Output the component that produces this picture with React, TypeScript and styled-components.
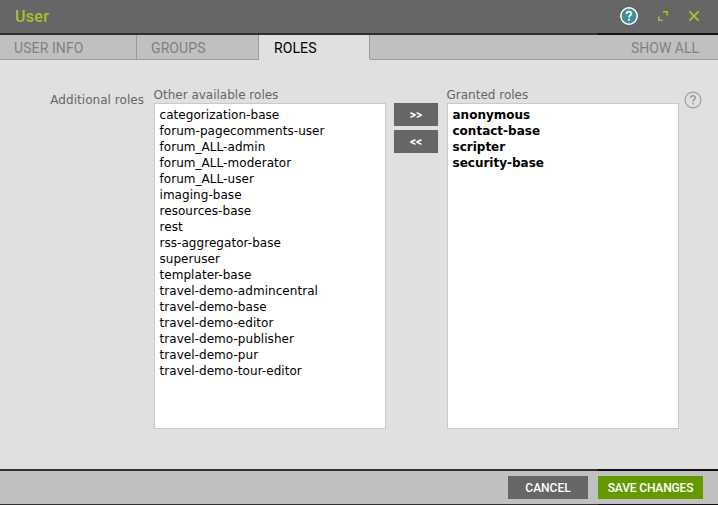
import React from "react";
import styled, { createGlobalStyle } from "styled-components";

const GlobalStyle = createGlobalStyle`
  *, *::before, *::after { box-sizing: border-box; }
  body { margin: 0; background: #e0e0e0; }
  button { border: 0; margin: 0; padding: 0; cursor: pointer; }
`;

const din = `Roboto, "Liberation Sans", sans-serif`;

const Dialog = styled.section`
  width: 718px;
  height: 505px;
  display: flex;
  flex-direction: column;
  overflow: hidden;
  background: #e0e0e0;
  color: #666;
  font: 12px/16px "DejaVu Sans", sans-serif;
`;

const Header = styled.header`
  flex: 0 0 33px;
  display: flex;
  align-items: center;
  justify-content: space-between;
  padding: 0 18px 0 15px;
  background: #666;
`;

const Title = styled.h1`
  margin: 0;
  color: #a7c22c;
  font: 500 16px/33px ${din};
  letter-spacing: 0.3px;
`;

const Actions = styled.div`
  display: flex;
  align-items: center;
  gap: 20px;
  padding-bottom: 1px;
`;

const IconButton = styled.button`
  display: flex;
  background: none;
`;

const Divider = styled.div<{ $size: number }>`
  flex: 0 0 ${(p) => p.$size}px;
  background: linear-gradient(to right, #303030 598px, #111 598px);
`;

const TabBar = styled.nav`
  flex: 0 0 25px;
  display: flex;
  background: #c0c0c0;
`;

const Tab = styled.button<{ $width: number; $active?: boolean }>`
  width: ${(p) => p.$width}px;
  padding: 2px 0 0 ${(p) => (p.$active ? 15 : 14)}px;
  text-align: left;
  border-right: 1px solid #9b9b9b;
  border-bottom: 1px solid ${(p) => (p.$active ? "#e0e0e0" : "#9b9b9b")};
  background: ${(p) => (p.$active ? "#e0e0e0" : "#c0c0c0")};
  color: ${(p) => (p.$active ? "#000" : "#808080")};
  font: 400 14px/22px ${din};
  letter-spacing: 0.1px;
`;

const ShowAll = styled.button`
  flex: 1;
  padding: 2px 19px 0 0;
  text-align: right;
  border-bottom: 1px solid #9b9b9b;
  background: #c0c0c0;
  color: #808080;
  font: 400 14px/22px ${din};
`;

const Form = styled.main`
  flex: 1;
  display: flex;
  align-items: flex-start;
  padding: 27px 16px 0 0;
`;

const FieldLabel = styled.div`
  width: 154px;
  padding: 5px 10px 0 0;
  text-align: right;
  letter-spacing: 0.04px;
`;

const RoleColumn = styled.div`
  width: 232px;
`;

const Caption = styled.div`
  height: 16px;
  margin-left: -0.5px;
`;

const RoleList = styled.ul<{ $bold?: boolean }>`
  height: 326px;
  margin: 0;
  padding: 3px 4.5px;
  list-style: none;
  border: 1px solid #c9c9c9;
  background: #fff;
  color: #000;
  font-weight: ${(p) => (p.$bold ? 700 : 400)};
  letter-spacing: ${(p) => (p.$bold ? 0 : 0.05)}px;
`;

const Role = styled.li`
  height: 16px;
  white-space: nowrap;
`;

const Transfer = styled.div`
  display: flex;
  flex-direction: column;
  gap: 4px;
  width: 44px;
  margin: 16px 9px 0 8px;
`;

const TransferButton = styled.button`
  height: 23px;
  background: #666;
  color: #fff;
  font: 700 12px/24px ${din};
`;

const FieldHelp = styled.button`
  display: flex;
  margin: 4px 0 0 4.5px;
  background: none;
`;

const Footer = styled.footer`
  flex: 0 0 33px;
  display: flex;
  align-items: center;
  justify-content: flex-end;
  gap: 10px;
  padding-right: 15px;
  background: #c0c0c0;
`;

const FooterButton = styled.button<{ $primary?: boolean }>`
  width: ${(p) => (p.$primary ? 105 : 80)}px;
  height: 23px;
  padding-top: 2px;
  background: ${(p) => (p.$primary ? "#669900" : "#666")};
  color: #fff;
  font: 500 12px/21px ${din};
  letter-spacing: ${(p) => (p.$primary ? -0.15 : 0)}px;
  white-space: nowrap;
`;

const HelpIcon = ({ filled }: { filled?: boolean }) => (
  <svg width="18" height="18" viewBox="0 0 18 18" fill="none">
    <circle
      cx="9"
      cy="9"
      r={filled ? 8.2 : 7.9}
      fill={filled ? "#428d9e" : "none"}
      stroke={filled ? "#fff" : "#9d9d9d"}
      strokeWidth={filled ? 1.5 : 1.2}
    />
    <path
      d="M6.6 6.9C6.6 3.9 11.3 4 11.3 6.7C11.3 8.4 9 8.4 9 10.4M9 11.8V13.5"
      stroke={filled ? "#fff" : "#9d9d9d"}
      strokeWidth={filled ? 1.9 : 1.5}
    />
  </svg>
);

const ExpandIcon = () => (
  <svg width="10" height="10" viewBox="0 0 10 10" fill="none" stroke="#a7c22c" strokeWidth="1.5">
    <path d="M5 0.8H9.2V4.4M0.8 5.4V9.2H4.6" />
  </svg>
);

const CloseIcon = () => (
  <svg width="12" height="12" viewBox="0 0 12 12" fill="none" stroke="#a7c22c" strokeWidth="1.9">
    <path d="M1.4 1.4L10.6 10.6M10.6 1.4L1.4 10.6" />
  </svg>
);

const availableRoles = [
  "categorization-base",
  "forum-pagecomments-user",
  "forum_ALL-admin",
  "forum_ALL-moderator",
  "forum_ALL-user",
  "imaging-base",
  "resources-base",
  "rest",
  "rss-aggregator-base",
  "superuser",
  "templater-base",
  "travel-demo-admincentral",
  "travel-demo-base",
  "travel-demo-editor",
  "travel-demo-publisher",
  "travel-demo-pur",
  "travel-demo-tour-editor",
];

const grantedRoles = ["anonymous", "contact-base", "scripter", "security-base"];

export default function App() {
  return (
    <>
      <GlobalStyle />
      <Dialog>
        <Header>
          <Title>User</Title>
          <Actions>
            <IconButton aria-label="Help"><HelpIcon filled /></IconButton>
            <IconButton aria-label="Expand"><ExpandIcon /></IconButton>
            <IconButton aria-label="Close"><CloseIcon /></IconButton>
          </Actions>
        </Header>
        <Divider $size={2} />
        <TabBar>
          <Tab $width={137}>USER INFO</Tab>
          <Tab $width={122}>GROUPS</Tab>
          <Tab $width={111} $active>ROLES</Tab>
          <ShowAll>SHOW ALL</ShowAll>
        </TabBar>
        <Form>
          <FieldLabel>Additional roles</FieldLabel>
          <RoleColumn>
            <Caption>Other available roles</Caption>
            <RoleList>
              {availableRoles.map((role) => <Role key={role}>{role}</Role>)}
            </RoleList>
          </RoleColumn>
          <Transfer>
            <TransferButton>&gt;&gt;</TransferButton>
            <TransferButton>&lt;&lt;</TransferButton>
          </Transfer>
          <RoleColumn>
            <Caption>Granted roles</Caption>
            <RoleList $bold>
              {grantedRoles.map((role) => <Role key={role}>{role}</Role>)}
            </RoleList>
          </RoleColumn>
          <FieldHelp aria-label="Field help"><HelpIcon /></FieldHelp>
        </Form>
        <Divider $size={2} />
        <Footer>
          <FooterButton>CANCEL</FooterButton>
          <FooterButton $primary>SAVE CHANGES</FooterButton>
        </Footer>
        <Divider $size={1} />
      </Dialog>
    </>
  );
}
